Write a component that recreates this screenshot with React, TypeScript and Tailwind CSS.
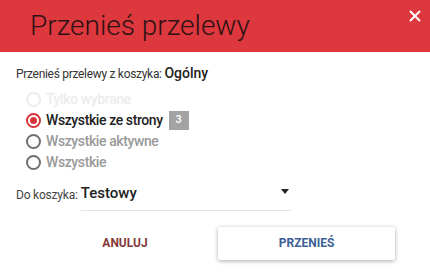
import { X } from "lucide-react";

const OPTIONS = [
  { label: "Tylko wybrane", disabled: true },
  { label: "Wszystkie ze strony", checked: true, badge: 3 },
  { label: "Wszystkie aktywne" },
  { label: "Wszystkie" },
];

function Radio({ checked, disabled }: { checked?: boolean; disabled?: boolean }) {
  if (checked) {
    return (
      <span className="flex h-[15px] w-[15px] items-center justify-center rounded-full border-2 border-[#d9343a]">
        <span className="h-[7px] w-[7px] rounded-full bg-[#d9343a]" />
      </span>
    );
  }
  return (
    <span
      className={`h-[15px] w-[15px] rounded-full border-2 ${disabled ? "border-[#ececec]" : "border-[#707070]"}`}
    />
  );
}

export default function App() {
  return (
    <div className="h-[274px] w-[430px] bg-white font-['Roboto',sans-serif]">
      {/* Header */}
      <div className="flex h-[52px] items-start justify-between bg-[#dc383d] pl-[30px] pr-[6px]">
        <h1 className="mt-[9px] text-[28px] font-light leading-[34px] text-[#2e1214]">Przenieś przelewy</h1>
        <button className="mt-[7px] text-white">
          <X size={18} strokeWidth={2.5} />
        </button>
      </div>

      <div className="px-4">
        <p className="mt-[12px] text-[12px] leading-[18px] tracking-[-0.3px] text-[#333]">
          Przenieś przelewy z koszyka:{" "}
          <span className="text-[14px] font-medium tracking-normal text-[#222]">Ogólny</span>
        </p>

        {/* Options */}
        <div className="mt-[6px] flex flex-col pl-[10px]">
          {OPTIONS.map(o => (
            <label key={o.label} className="flex h-[21px] items-center gap-[5px]">
              <Radio checked={o.checked} disabled={o.disabled} />
              <span
                className={`text-[14px] font-medium tracking-[-0.4px] ${
                  o.disabled ? "text-[#ececec]" : o.checked ? "text-[#222]" : "text-[#9a9a9a]"
                }`}
              >
                {o.label}
              </span>
              {o.badge && (
                <span className="ml-[1px] flex h-[19px] w-[20px] items-center justify-center bg-[#a3a3a3] text-[11px] font-medium text-white">
                  {o.badge}
                </span>
              )}
            </label>
          ))}
        </div>

        {/* Target basket */}
        <div className="mt-[9px] flex items-end gap-[3px]">
          <span className="pb-[7px] text-[12px] tracking-[-0.2px] text-[#444]">Do koszyka:</span>
          <div className="flex w-[210px] items-center justify-between border-b border-[#e4e4e4] pb-[5px]">
            <span className="text-[15px] font-medium text-[#222]">Testowy</span>
            <svg width="8" height="5" viewBox="0 0 8 5" className="mr-[2px] mb-[3px]">
              <path d="M0 0h8L4 5z" fill="#222" />
            </svg>
          </div>
        </div>
      </div>

      {/* Actions */}
      <div className="mt-[16px] flex items-center">
        <div className="flex w-[218px] justify-center pl-[32px]">
          <button className="text-[12px] font-bold text-[#833a3a]">ANULUJ</button>
        </div>
        <button className="h-[33px] w-[177px] rounded-[2px] bg-white text-[12px] font-bold text-[#3d5f96] shadow-[0_1px_4px_rgba(0,0,0,0.35)]">
          PRZENIEŚ
        </button>
      </div>
    </div>
  );
}
